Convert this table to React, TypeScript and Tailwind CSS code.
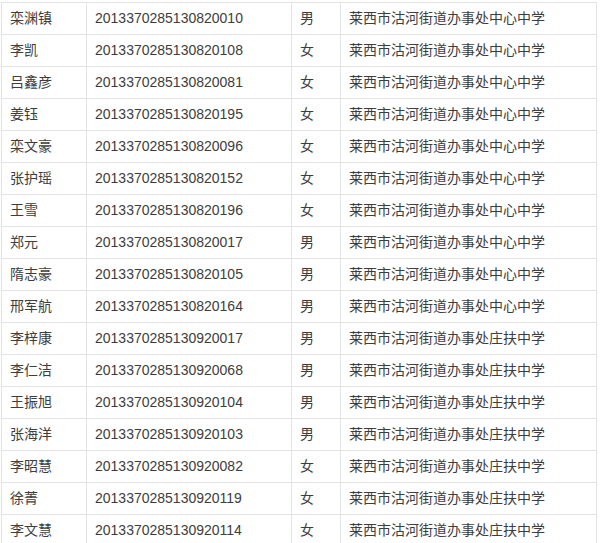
import React from 'react';

type Row = [string, string, string, string];

const A = '莱西市沽河街道办事处中心中学';
const B = '莱西市沽河街道办事处庄扶中学';

const rows: Row[] = [
  ['栾渊镇', '2013370285130820010', '男', A],
  ['李凯', '2013370285130820108', '女', A],
  ['吕鑫彦', '2013370285130820081', '女', A],
  ['姜钰', '2013370285130820195', '女', A],
  ['栾文豪', '2013370285130820096', '女', A],
  ['张护瑶', '2013370285130820152', '女', A],
  ['王雪', '2013370285130820196', '女', A],
  ['郑元', '2013370285130820017', '男', A],
  ['隋志豪', '2013370285130820105', '男', A],
  ['邢军航', '2013370285130820164', '男', A],
  ['李梓康', '2013370285130920017', '男', B],
  ['李仁洁', '2013370285130920068', '男', B],
  ['王振旭', '2013370285130920104', '男', B],
  ['张海洋', '2013370285130920103', '男', B],
  ['李昭慧', '2013370285130920082', '女', B],
  ['徐菁', '2013370285130920119', '女', B],
  ['李文慧', '2013370285130920114', '女', B],
];

export default function App() {
  return (
    <div className="h-[543px] w-[600px] overflow-hidden bg-white font-['Liberation_Sans','Noto_Sans_CJK_SC',sans-serif] text-[14px] text-[#3d3d3d]">
      {/* 名单表格 */}
      <div className="ml-px mt-[2px] flex flex-col">
        {rows.map((r, i) => (
          <div key={i} className="grid h-8 grid-cols-[85px_205px_49px_257px]">
            <div className="flex items-center border-l border-t border-[#e3e3e3] pl-2">{r[0]}</div>
            <div className="flex items-center border-l border-t border-[#e3e3e3] pl-2">{r[1]}</div>
            <div className="flex items-center border-l border-t border-[#e3e3e3] pl-2">{r[2]}</div>
            <div className="flex items-center border-l border-r border-t border-[#e3e3e3] pl-2">{r[3]}</div>
          </div>
        ))}
      </div>
    </div>
  );
}
